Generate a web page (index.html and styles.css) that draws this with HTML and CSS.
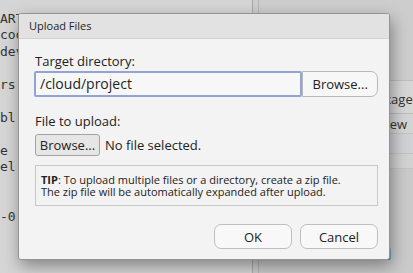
FILE: index.html
```html
<!DOCTYPE html>
<html>
<head>
<meta charset="utf-8">
<link rel="stylesheet" href="styles.css">
</head>
<body>
<div class="app">
  <div class="editor">
    <div class="ln">ARTICULAR</div>
    <div class="ln">code</div>
    <div class="ln">dev</div>
    <div class="ln"></div>
    <div class="ln">rs</div>
    <div class="ln"></div>
    <div class="ln">bl</div>
    <div class="ln"></div>
    <div class="ln">e</div>
    <div class="ln">el</div>
    <div class="ln"></div>
    <div class="ln"></div>
    <div class="ln">-0</div>
  </div>
  <div class="splitter"></div>
  <div class="side">
    <div class="side-top"></div>
    <div class="tabs"><span class="tab">Packages</span></div>
    <div class="row"><span class="row-text">New</span></div>
    <div class="row sel"><span class="row-link">Project</span></div>
    <div class="row empty"></div>
    <div class="side-fill">
      <div class="file"><span class="chk"></span><span class="fname">project.Rproj</span></div>
    </div>
  </div>
</div>

<div class="dialog">
  <div class="dlg-head">Upload Files</div>
  <div class="dlg-body">
    <div class="label">Target directory:</div>
    <div class="dir-row">
      <div class="dir-input">/cloud/project</div>
      <button class="dir-browse">Browse...</button>
    </div>
    <div class="label label-file">File to upload:</div>
    <div class="file-row">
      <button class="file-browse">Browse...</button>
      <span class="no-file">No file selected.</span>
    </div>
    <div class="tip"><b>TIP</b>: To upload multiple files or a directory, create a zip file.<br>The zip file will be automatically expanded after upload.</div>
    <div class="actions">
      <button class="btn">OK</button>
      <button class="btn">Cancel</button>
    </div>
  </div>
</div>
</body>
</html>
```
FILE: styles.css
```css
html, body {
  margin: 0;
  padding: 0;
}
body {
  width: 413px;
  height: 273px;
  overflow: hidden;
  background: #d2d2d2;
  position: relative;
  font-family: "Open Sans", sans-serif;
}
.app {
  display: flex;
  height: 273px;
}
.editor {
  width: 252px;
  background: #d5d5d5;
  padding-top: 10.5px;
  font-family: "DejaVu Sans Mono", monospace;
  font-size: 13px;
  line-height: 16.5px;
  color: #333333;
  overflow: hidden;
  white-space: nowrap;
  box-sizing: border-box;
}
.ln {
  height: 16.5px;
}
.splitter {
  width: 5px;
  border-left: 1px solid #a9a9a9;
  border-right: 1px solid #b4b4b4;
  background: #cdcdcd;
}
.side {
  flex: 1;
  display: flex;
  flex-direction: column;
  background: #d0d0d0;
  overflow: hidden;
  white-space: nowrap;
}
.side-top {
  height: 80px;
  background: #cdcdcd;
  border-bottom: 1px solid #bdbdbd;
}
.tabs {
  height: 33px;
  background: #d6d6d6;
  border-bottom: 1px solid #bcbcbc;
  display: flex;
  align-items: center;
  font-size: 13px;
  color: #333;
  padding-top: 4px;
  box-sizing: border-box;
}
.tab {
  margin-left: 104px;
}
.row {
  height: 19px;
  border-bottom: 1px solid #c2c2c2;
  display: flex;
  align-items: center;
  font-size: 13px;
  color: #333;
  background: #d4d4d4;
}
.row-text {
  margin-left: 121px;
}
.row.sel {
  background: #cfd1d5;
}
.row-link {
  margin-left: 88px;
  color: #41508a;
}
.row.empty {
  height: 14px;
  background: #d2d2d2;
}
.side-fill {
  flex: 1;
  background: #cacaca;
  display: flex;
  flex-direction: column;
  justify-content: flex-end;
}
.file {
  display: flex;
  align-items: center;
  height: 20px;
  margin-bottom: 11px;
  font-size: 12px;
}
.chk {
  width: 8px;
  height: 8px;
  border: 1px solid #8a8a8a;
  margin-left: 42px;
  margin-right: 8px;
}
.fname {
  color: #3d4c8c;
}

/* Dialog */
.dialog {
  position: absolute;
  left: 18px;
  top: 13px;
  width: 372px;
  height: 247px;
  box-sizing: border-box;
  border: 1px solid #949494;
  border-radius: 3px;
  background: #f3f3f3;
  box-shadow: 2px 6px 16px rgba(0, 0, 0, 0.38);
  overflow: hidden;
}
.dlg-head {
  height: 24px;
  background: #e2e2e2;
  border-bottom: 1px solid #d2d2d2;
  padding-left: 10px;
  font-size: 11px;
  line-height: 24px;
  color: #222;
}
.dlg-body {
  padding: 13px 11px 0 16px;
}
.label {
  font-size: 13px;
  line-height: 18px;
  color: #222;
}
.dir-row {
  display: flex;
  margin-top: 1px;
  margin-left: -1px;
}
.dir-input {
  width: 273px;
  height: 26px;
  box-sizing: border-box;
  border: 2px solid #93a3d4;
  border-radius: 2px;
  background: #f7f7f7;
  font-size: 14px;
  line-height: 22px;
  padding-left: 4px;
  color: #1e1e1e;
}
.dir-browse {
  width: 77px;
  height: 26px;
  box-sizing: border-box;
  border: 1px solid #b9b9b9;
  border-radius: 0 7px 7px 0;
  background: #f7f7f7;
  font-family: "Open Sans", sans-serif;
  font-size: 13px;
  color: #222;
  padding: 0;
}
.label-file {
  margin-top: 15px;
}
.file-row {
  display: flex;
  align-items: center;
  margin-top: 4px;
}
.file-browse {
  width: 65px;
  height: 22px;
  box-sizing: border-box;
  border: 1px solid #a3a3a3;
  border-radius: 3px;
  background: #e6e6e6;
  font-family: "Open Sans", sans-serif;
  font-size: 13px;
  color: #222;
  padding: 0;
}
.no-file {
  margin-left: 5px;
  font-size: 13px;
  color: #222;
}
.tip {
  margin-top: 9px;
  width: 343px;
  height: 41px;
  box-sizing: border-box;
  border: 1px solid #c8c8c8;
  padding: 8px 5px 0 5px;
  font-size: 11px;
  line-height: 12px;
  color: #222;
}
.tip b {
  font-weight: 700;
}
.actions {
  display: flex;
  justify-content: flex-end;
  gap: 8px;
  margin-top: 18px;
  width: 343px;
}
.btn {
  width: 78px;
  height: 25px;
  box-sizing: border-box;
  border: 1px solid #bfbfbf;
  border-radius: 7px;
  background: #f8f8f8;
  font-family: "Open Sans", sans-serif;
  font-size: 13px;
  color: #222;
  padding: 0;
}
```
